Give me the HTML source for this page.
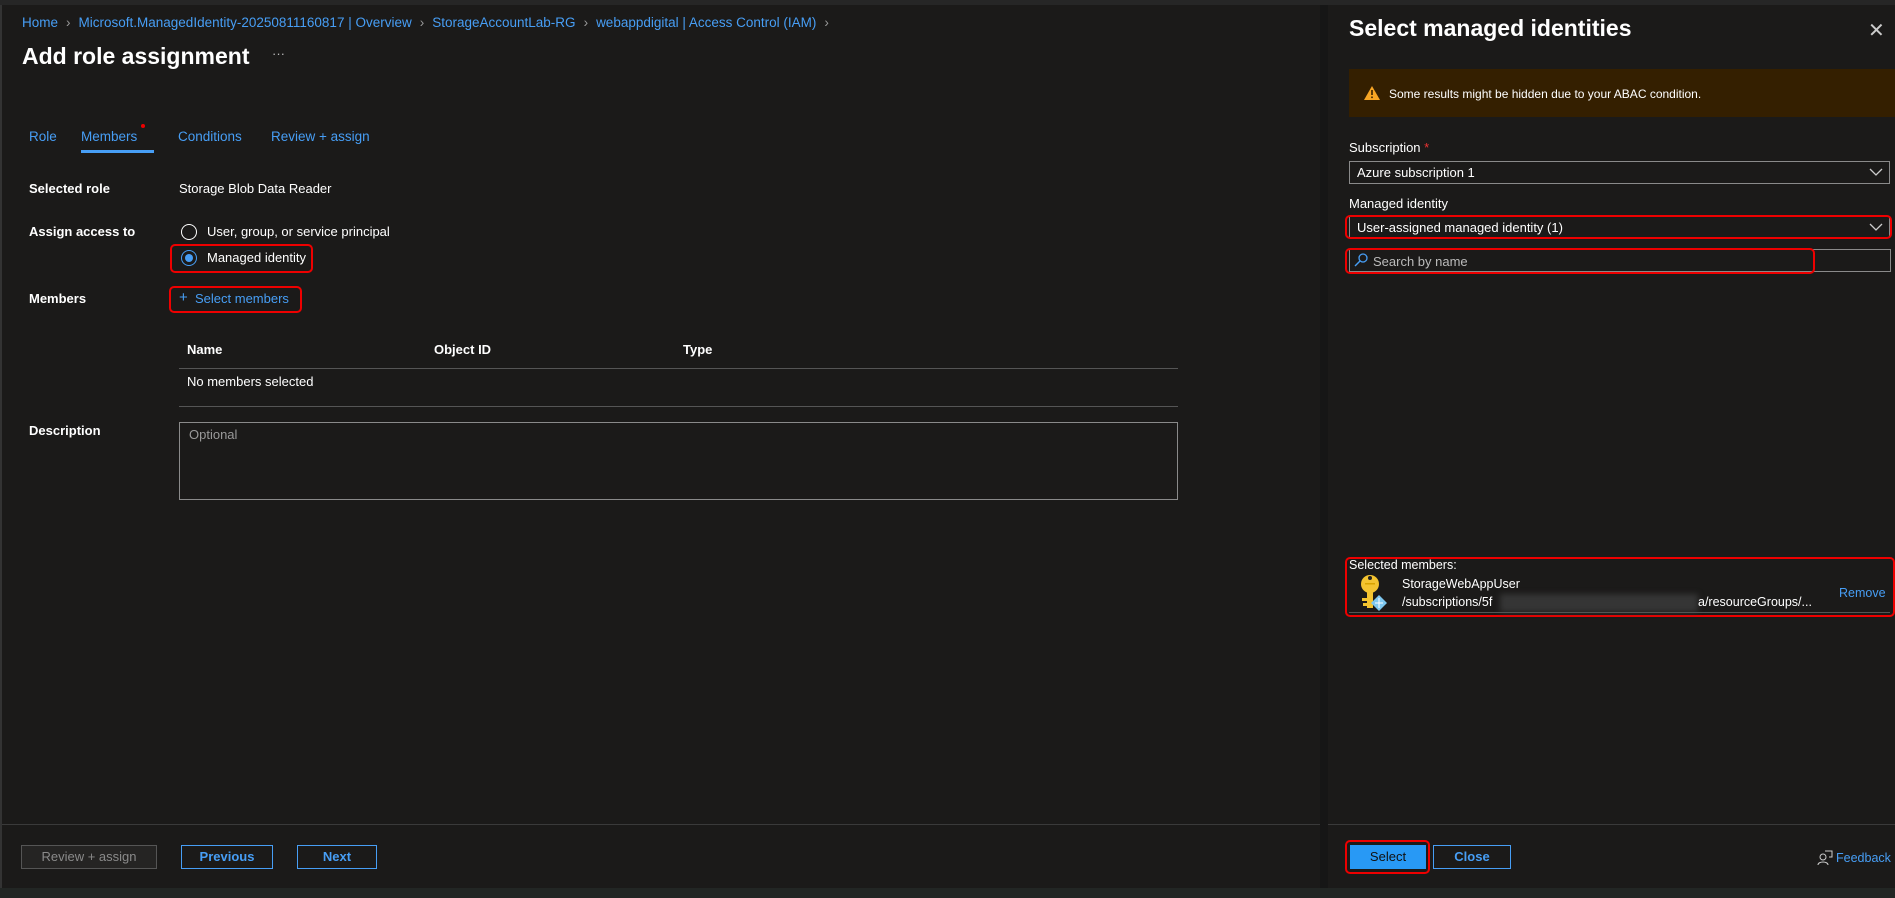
<!DOCTYPE html>
<html><head><meta charset="utf-8"><style>
*{margin:0;padding:0;box-sizing:border-box}
body{width:1895px;height:898px;background:#1b1a19;font-family:"Liberation Sans",sans-serif;font-size:13px;color:#fff;position:relative;overflow:hidden}
.a{position:absolute;white-space:nowrap}
.l{color:#479ef5}
.b{font-weight:bold}
.rb{position:absolute;border:2px solid #e00;border-radius:5px}
.sep{color:#999;margin:0 8px}
</style></head><body>
<div class="a" style="left:0;top:0;width:1895px;height:5px;background:#262626"></div>
<div class="a" style="left:0;top:888px;width:1895px;height:10px;background:#222624"></div>
<div class="a" style="left:0;top:5px;width:2px;height:883px;background:#333"></div>

<div class="a l" style="left:22px;top:15px;font-size:13.5px">Home<span class="sep">›</span>Microsoft.ManagedIdentity-20250811160817 | Overview<span class="sep">›</span>StorageAccountLab-RG<span class="sep">›</span>webappdigital | Access Control (IAM)<span class="sep">›</span></div>
<div class="a" style="left:22px;top:43px;font-size:23px;font-weight:600">Add role assignment</div>
<div class="a" style="left:272px;top:46px;color:#bbb">···</div>

<div class="a l" style="left:29px;top:129px;font-size:13.5px">Role</div>
<div class="a l" style="left:81px;top:129px;font-size:13.5px">Members</div>
<div class="a" style="left:141px;top:124px;width:4px;height:4px;border-radius:2px;background:#e00"></div>
<div class="a" style="left:81px;top:150px;width:73px;height:3px;background:#479ef5"></div>
<div class="a l" style="left:178px;top:129px;font-size:13.5px">Conditions</div>
<div class="a l" style="left:271px;top:129px;font-size:13.5px">Review + assign</div>

<div class="a b" style="left:29px;top:181px">Selected role</div>
<div class="a" style="left:179px;top:181px">Storage Blob Data Reader</div>
<div class="a b" style="left:29px;top:224px">Assign access to</div>
<div class="a" style="left:181px;top:224px;width:16px;height:16px;border:1px solid #fff;border-radius:50%"></div>
<div class="a" style="left:207px;top:224px">User, group, or service principal</div>
<div class="a" style="left:181px;top:250px;width:16px;height:16px;border:1px solid #479ef5;border-radius:50%"></div>
<div class="a" style="left:185px;top:254px;width:8px;height:8px;background:#479ef5;border-radius:50%"></div>
<div class="a" style="left:207px;top:250px">Managed identity</div>
<div class="rb" style="left:170px;top:244px;width:143px;height:29px"></div>
<div class="a b" style="left:29px;top:291px">Members</div>
<div class="a l" style="left:179px;top:289px;font-size:15px">+</div>
<div class="a l" style="left:195px;top:291px">Select members</div>
<div class="rb" style="left:169px;top:286px;width:133px;height:27px"></div>

<div class="a b" style="left:187px;top:342px">Name</div>
<div class="a b" style="left:434px;top:342px">Object ID</div>
<div class="a b" style="left:683px;top:342px">Type</div>
<div class="a" style="left:179px;top:368px;width:999px;height:1px;background:#555"></div>
<div class="a" style="left:187px;top:374px">No members selected</div>
<div class="a" style="left:179px;top:406px;width:999px;height:1px;background:#555"></div>
<div class="a b" style="left:29px;top:423px">Description</div>
<div class="a" style="left:179px;top:422px;width:999px;height:78px;border:1px solid #8a8a8a"></div>
<div class="a" style="left:189px;top:427px;color:#999">Optional</div>

<div class="a" style="left:2px;top:824px;width:1325px;height:1px;background:#3a3a3a"></div>
<div class="a" style="left:21px;top:845px;width:136px;height:24px;border:1px solid #555;background:#252423;color:#8a8a8a;text-align:center;line-height:22px">Review + assign</div>
<div class="a" style="left:181px;top:845px;width:92px;height:24px;border:1px solid #479ef5;color:#479ef5;text-align:center;line-height:22px;font-weight:600">Previous</div>
<div class="a" style="left:297px;top:845px;width:80px;height:24px;border:1px solid #479ef5;color:#479ef5;text-align:center;line-height:22px;font-weight:600">Next</div>

<div class="a" style="left:1320px;top:5px;width:8px;height:883px;background:#161616"></div>
<div class="a" style="left:1349px;top:15px;font-size:23px;font-weight:bold">Select managed identities</div>
<div class="a" style="left:1868px;top:18px;font-size:20px;color:#ccc">✕</div>
<div class="a" style="left:1349px;top:69px;width:546px;height:48px;background:#341f00"></div>
<svg class="a" style="left:1364px;top:86px" width="16" height="14" viewBox="0 0 16 14"><path d="M8 0L16 14H0Z" fill="#f7a524"/><rect x="7.2" y="4" width="1.6" height="5" fill="#341f00"/><rect x="7.2" y="10.5" width="1.6" height="1.6" fill="#341f00"/></svg>
<div class="a" style="left:1389px;top:87px;font-size:12px">Some results might be hidden due to your ABAC condition.</div>
<div class="a" style="left:1349px;top:140px">Subscription <span style="color:#e33">*</span></div>
<div class="a" style="left:1349px;top:161px;width:541px;height:23px;border:1px solid #8a8a8a"></div>
<div class="a" style="left:1357px;top:165px">Azure subscription 1</div>
<div class="a" style="left:1349px;top:196px">Managed identity</div>
<div class="a" style="left:1349px;top:216px;width:541px;height:22px;border:1px solid #8a8a8a"></div>
<div class="a" style="left:1357px;top:220px">User-assigned managed identity (1)</div>
<svg class="a" style="left:1869px;top:168px" width="14" height="8"><path d="M1 1L7 7L13 1" stroke="#ccc" fill="none" stroke-width="1.3"/></svg>
<svg class="a" style="left:1869px;top:223px" width="14" height="8"><path d="M1 1L7 7L13 1" stroke="#ccc" fill="none" stroke-width="1.3"/></svg>
<div class="rb" style="left:1345px;top:215px;width:547px;height:24px"></div>
<div class="a" style="left:1349px;top:249px;width:542px;height:23px;border:1px solid #8a8a8a"></div>
<svg class="a" style="left:1354px;top:253px" width="14" height="14"><circle cx="9" cy="5" r="4" stroke="#479ef5" fill="none" stroke-width="1.3"/><path d="M6 8L1 13" stroke="#479ef5" stroke-width="1.4"/></svg>
<div class="a" style="left:1373px;top:254px;color:#bbb">Search by name</div>
<div class="rb" style="left:1345px;top:248px;width:470px;height:26px"></div>

<div class="rb" style="left:1345px;top:557px;width:550px;height:60px"></div>
<div class="a" style="left:1349px;top:558px;font-size:12.5px">Selected members:</div>
<svg class="a" style="left:1359px;top:574px" width="30" height="38" viewBox="0 0 30 38"><circle cx="11" cy="10" r="9" fill="#f4c430"/><rect x="8" y="16" width="6" height="18" fill="#f4c430"/><rect x="3" y="24" width="6" height="3" fill="#f4c430"/><rect x="4" y="29" width="5" height="3" fill="#f4c430"/><circle cx="11" cy="4" r="2" fill="#222"/><rect x="6" y="9" width="10" height="1.5" fill="#d9a400"/><path d="M20 21L28 29L20 37L12 29Z" fill="#7fc8f0"/><path d="M20 24V34M16 29H24" stroke="#fff" stroke-width="1"/></svg>
<div class="a" style="left:1402px;top:577px;font-size:12.5px">StorageWebAppUser</div>
<div class="a" style="left:1402px;top:595px;font-size:12.5px">/subscriptions/5f</div>
<div class="a" style="left:1500px;top:594px;width:198px;height:18px;background:#353535;filter:blur(3px)"></div>
<div class="a" style="left:1698px;top:595px;font-size:12.5px">a/resourceGroups/...</div>
<div class="a l" style="left:1839px;top:586px;font-size:12.5px">Remove</div>
<div class="a" style="left:1349px;top:612px;width:541px;height:1px;background:#555"></div>

<div class="a" style="left:1328px;top:824px;width:567px;height:1px;background:#3a3a3a"></div>
<div class="a" style="left:1350px;top:845px;width:76px;height:24px;background:#2899f5;color:#111;text-align:center;line-height:24px">Select</div>
<div class="rb" style="left:1345px;top:840px;width:85px;height:34px"></div>
<div class="a" style="left:1433px;top:845px;width:78px;height:24px;border:1px solid #479ef5;color:#479ef5;text-align:center;line-height:22px;font-weight:600">Close</div>
<svg class="a" style="left:1817px;top:850px" width="16" height="16"><circle cx="6" cy="7" r="3" stroke="#ccc" fill="none"/><path d="M1 15C1 11 11 11 11 15M8 1H15V7H12" stroke="#ccc" fill="none"/></svg>
<div class="a l" style="left:1836px;top:851px;font-size:12.5px">Feedback</div>
</body></html>
